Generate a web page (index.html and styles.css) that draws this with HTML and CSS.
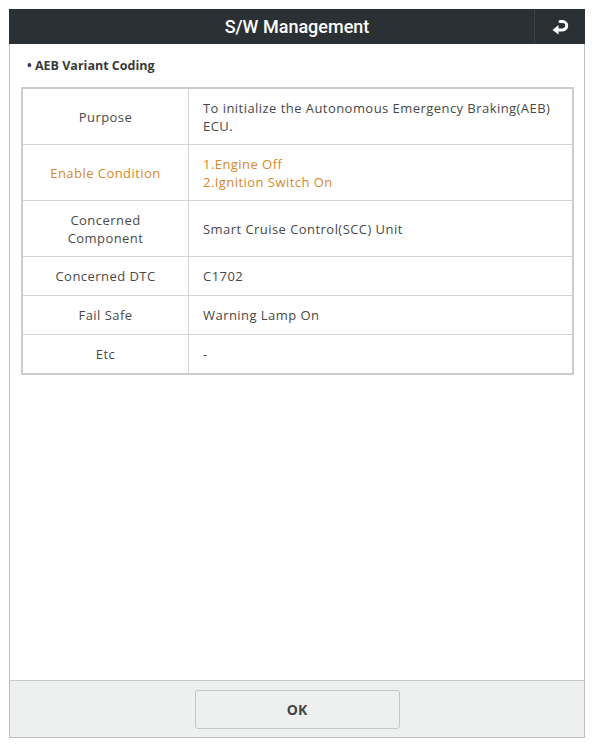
FILE: index.html
```html
<!DOCTYPE html>
<html lang="en">

<head>
    <meta charset="UTF-8">
    <meta name="viewport" content="width=device-width, initial-scale=1.0">
    <title>S/W Management</title>
    <link rel="stylesheet" href="styles.css">
</head>

<body>
    <div id="frame">
        <header class="topbar">
            <span class="spacer"></span>
            <h1 class="title">S/W Management</h1>
            <button class="back" type="button">
                <svg width="20" height="17" viewBox="0 0 20 17">
                    <path d="M10 3.5 h2.5 a4.2 4.2 0 0 1 0 8.4 H7" fill="none" stroke="#fff" stroke-width="3" stroke-linecap="round" />
                    <path d="M8.5 7 L2.5 11.9 L8.5 16.5 Z" fill="#fff" />
                </svg>
            </button>
        </header>

        <main class="content">
            <div class="subtitle">&bull; AEB Variant Coding</div>
            <table class="info">
                <tr class="r-tall">
                    <th>Purpose</th>
                    <td>To initialize the Autonomous Emergency Braking(AEB) ECU.</td>
                </tr>
                <tr class="r-tall warn">
                    <th>Enable Condition</th>
                    <td>1.Engine Off<br>2.Ignition Switch On</td>
                </tr>
                <tr class="r-tall">
                    <th>Concerned<br>Component</th>
                    <td>Smart Cruise Control(SCC) Unit</td>
                </tr>
                <tr>
                    <th>Concerned DTC</th>
                    <td>C1702</td>
                </tr>
                <tr>
                    <th>Fail Safe</th>
                    <td>Warning Lamp On</td>
                </tr>
                <tr>
                    <th>Etc</th>
                    <td>-</td>
                </tr>
            </table>
        </main>

        <footer class="actions">
            <button class="ok" type="button">OK</button>
        </footer>
    </div>
</body>

</html>
```

FILE: styles.css
```css
html,
body {
    margin: 0;
    padding: 0;
    background: #fff;
}

body {
    font-family: "Open Sans", "Noto Sans", Arial, sans-serif;
    color: #4a4a4a;
}

#frame {
    width: 574px;
    height: 728px;
    margin: 9px 0 0 9px;
    border: 1px solid #bdbdbd;
    border-top: none;
    display: flex;
    flex-direction: column;
}

.topbar {
    height: 35px;
    background: #2b3034;
    display: grid;
    grid-template-columns: 51px 1fr 51px;
    align-items: stretch;
    margin: 0 -1px;
}

.title {
    margin: 0;
    color: #fff;
    font-family: Roboto, Arial, sans-serif;
    font-size: 18px;
    font-weight: 500;
    display: flex;
    align-items: center;
    justify-content: center;
}

.back {
    border: none;
    border-left: 1px solid #3c4247;
    background: transparent;
    padding: 0;
    display: flex;
    align-items: center;
    justify-content: center;
}

.content {
    flex: 1;
    padding: 14px 11px 0 11px;
}

.subtitle {
    font-size: 12.5px;
    font-weight: bold;
    color: #3a3a3a;
    padding-left: 6px;
    height: 15px;
    line-height: 15px;
}

.info {
    margin-top: 14px;
    width: 553px;
    border-collapse: collapse;
    border: 2px solid #cdcdcd;
    font-size: 13px;
    letter-spacing: 0.45px;
}

.info th,
.info td {
    border: 1px solid #d4d4d4;
    height: 38px;
    padding: 0 8px;
    line-height: 18px;
}

.info th {
    width: 149px;
    font-weight: normal;
    text-align: center;
    color: #4a4a4a;
}

.info td {
    text-align: left;
    color: #484848;
    padding: 0 14px 0 14px;
}

.info .r-tall th,
.info .r-tall td {
    height: 55px;
}

.warn th,
.warn td {
    color: #d8872a;
}

.actions {
    height: 56px;
    background: #eef0ef;
    border-top: 1px solid #c9c9c9;
    display: flex;
    justify-content: center;
    align-items: flex-start;
}

.ok {
    margin-top: 9px;
    width: 205px;
    height: 39px;
    background: #eef0ef;
    border: 1px solid #c6c6c6;
    border-radius: 3px;
    font-family: "Open Sans", Arial, sans-serif;
    font-size: 14px;
    font-weight: bold;
    color: #444;
}
```
